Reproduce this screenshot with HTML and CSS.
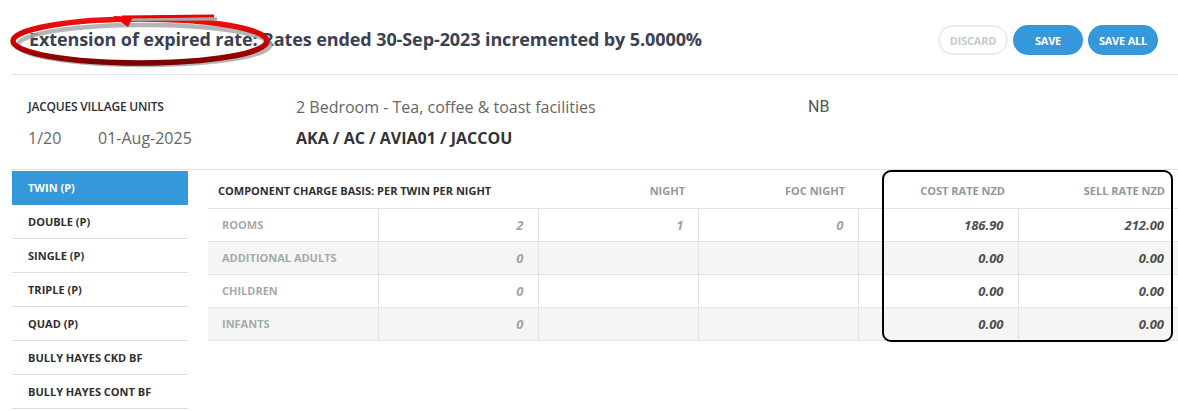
FILE: index.html
```html
<!DOCTYPE html>
<html>
<head>
<meta charset="utf-8">
<link rel="stylesheet" href="styles.css">
</head>
<body>
<div class="page">
  <header class="top">
    <h1 class="title">Extension of expired rate: Rates ended 30-Sep-2023 incremented by 5.0000%</h1>
    <div class="actions">
      <button class="btn btn-ghost">DISCARD</button>
      <button class="btn btn-primary">SAVE</button>
      <button class="btn btn-primary">SAVE ALL</button>
    </div>
  </header>

  <section class="info">
    <div class="info-row">
      <div class="c1 supplier">JACQUES VILLAGE UNITS</div>
      <div class="c3 desc">2 Bedroom - Tea, coffee &amp; toast facilities</div>
      <div class="c4 nb">NB</div>
    </div>
    <div class="info-row">
      <div class="c1 small">1/20</div>
      <div class="c2 small">01-Aug-2025</div>
      <div class="c3 code">AKA / AC / AVIA01 / JACCOU</div>
    </div>
  </section>

  <section class="main">
    <nav class="side">
      <div class="side-item active">TWIN (P)</div>
      <div class="side-item">DOUBLE (P)</div>
      <div class="side-item">SINGLE (P)</div>
      <div class="side-item">TRIPLE (P)</div>
      <div class="side-item">QUAD (P)</div>
      <div class="side-item">BULLY HAYES CKD BF</div>
      <div class="side-item">BULLY HAYES CONT BF</div>
    </nav>
    <div class="table-wrap">
      <table class="rates">
        <colgroup>
          <col class="col-first">
          <col class="col-std">
          <col class="col-std">
          <col class="col-std">
          <col class="col-std">
          <col class="col-std">
        </colgroup>
        <thead>
          <tr>
            <th class="basis" colspan="2">COMPONENT CHARGE BASIS: PER TWIN PER NIGHT</th>
            <th>NIGHT</th>
            <th>FOC NIGHT</th>
            <th>COST RATE NZD</th>
            <th>SELL RATE NZD</th>
          </tr>
        </thead>
        <tbody>
          <tr>
            <td class="lbl">ROOMS</td><td class="n">2</td><td class="n">1</td><td class="n">0</td><td class="r">186.90</td><td class="r">212.00</td>
          </tr>
          <tr class="alt">
            <td class="lbl">ADDITIONAL ADULTS</td><td class="n">0</td><td></td><td></td><td class="r">0.00</td><td class="r">0.00</td>
          </tr>
          <tr>
            <td class="lbl">CHILDREN</td><td class="n">0</td><td></td><td></td><td class="r">0.00</td><td class="r">0.00</td>
          </tr>
          <tr class="alt">
            <td class="lbl">INFANTS</td><td class="n">0</td><td></td><td></td><td class="r">0.00</td><td class="r">0.00</td>
          </tr>
        </tbody>
      </table>
      <div class="highlight-box"></div>
    </div>
  </section>

  <svg class="annot" width="290" height="80" viewBox="0 0 290 80">
    <defs>
      <linearGradient id="rg" x1="0" y1="0" x2="0" y2="1">
        <stop offset="0" stop-color="#f01010"/>
        <stop offset="0.55" stop-color="#c40000"/>
        <stop offset="1" stop-color="#7a0000"/>
      </linearGradient>
    </defs>
    <ellipse cx="144" cy="45" rx="126" ry="20" fill="none" stroke="#a8a8a8" stroke-width="4.5" opacity="0.85"/>
    <ellipse cx="140" cy="41" rx="127" ry="22" fill="none" stroke="url(#rg)" stroke-width="5.5"/>
    <path d="M217 19 L126 19.5" stroke="#a8a8a8" stroke-width="3" fill="none"/>
    <path d="M214 16 L122 17" stroke="#ee0000" stroke-width="3" fill="none"/>
    <path d="M113 16 L128 27 L133 17 Z" fill="#ee0000"/>
  </svg>
</div>
</body>
</html>
```

FILE: styles.css
```css
* { box-sizing: border-box; }
html, body { margin: 0; padding: 0; background: #fff; }
body {
  font-family: "Open Sans", "Liberation Sans", sans-serif;
  color: #333;
  width: 1178px;
  overflow: hidden;
}
.page {
  position: relative;
  padding-left: 12px;
  height: 411px;
}
.top {
  display: flex;
  align-items: center;
  justify-content: space-between;
  height: 75px;
  padding: 4px 20px 0 17px;
  border-bottom: 1px solid #e2e0f2;
}
.title {
  margin: 0;
  font-size: 18px;
  font-weight: 700;
  color: #3b4152;
  letter-spacing: -0.1px;
}
.actions {
  display: flex;
  gap: 5px;
  padding-top: 2px;
}
.btn {
  font-family: "Open Sans", sans-serif;
  font-size: 11px;
  font-weight: 700;
  height: 30px;
  width: 70px;
  border-radius: 15px;
  border: 2px solid transparent;
  padding: 0;
  letter-spacing: -0.2px;
}
.btn-ghost {
  background: #fff;
  border-color: #e8eeee;
  color: #c5cbcd;
}
.btn-primary {
  background: #3498db;
  border-color: #3498db;
  color: #fff;
}

.info {
  height: 95px;
  border-bottom: 1px solid #e2e0ea;
  padding: 16px 0 0 16px;
}
.info-row {
  display: grid;
  grid-template-columns: 70px 198px 512px auto;
  align-items: center;
  height: 31px;
}
.c1 { grid-column: 1; }
.c2 { grid-column: 2; }
.c3 { grid-column: 3; }
.c4 { grid-column: 4; }
.supplier {
  grid-column: 1 / 3;
  font-size: 12px;
  font-weight: 600;
  color: #2f2f2f;
  letter-spacing: -0.2px;
}
.desc {
  font-size: 16px;
  color: #666;
}
.nb {
  font-family: Roboto, "Liberation Sans", sans-serif;
  font-size: 16px;
  color: #555;
}
.small {
  font-size: 16px;
  color: #666;
}
.code {
  font-size: 16px;
  font-weight: 700;
  color: #333;
}

.main {
  display: flex;
  gap: 20px;
  padding-top: 1px;
}
.side {
  width: 176px;
  flex: none;
}
.side-item {
  height: 34px;
  display: flex;
  align-items: center;
  padding: 0 16px;
  font-size: 11px;
  font-weight: 700;
  color: #2f2f2f;
  border-bottom: 1px solid #dedede;
}
.side-item.active {
  background: #3498db;
  color: #fff;
  border-bottom-color: #3498db;
}

.table-wrap {
  position: relative;
  flex: 1;
}
.rates {
  border-collapse: collapse;
  width: 970px;
  table-layout: fixed;
  margin-top: 3px;
}
.col-first { width: 170px; }
.col-std { width: 160px; }
.rates th {
  height: 34px;
  font-size: 11px;
  font-weight: 700;
  color: #8c9a9a;
  text-align: right;
  padding: 0 13px;
  border-bottom: 1px solid #e3e3e3;
  white-space: nowrap;
}
.rates th.basis {
  text-align: left;
  color: #2f2f2f;
  padding-left: 10px;
}
.rates td {
  height: 33px;
  border-bottom: 1px solid #e3e3e3;
  border-left: 1px solid #e3e3e3;
  padding: 0 14px;
  text-align: right;
}
.rates td:first-child { border-left: none; }
.rates tr.alt td { background: #f5f5f5; }
.rates td.lbl {
  text-align: left;
  font-size: 11px;
  font-weight: 700;
  color: #a2abab;
}
.rates td.n {
  font-size: 13px;
  font-style: italic;
  font-weight: 700;
  color: #9aa6a6;
}
.rates td.r {
  font-size: 13px;
  font-style: italic;
  font-weight: 700;
  color: #4f4f4f;
}

.highlight-box {
  position: absolute;
  left: 674px;
  top: -1px;
  width: 291px;
  height: 172px;
  border: 2px solid #000;
  border-radius: 9px;
  pointer-events: none;
}

.annot {
  position: absolute;
  left: 0;
  top: 0;
}
```
